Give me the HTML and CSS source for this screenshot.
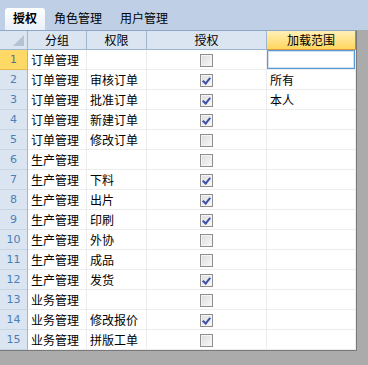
FILE: index.html
```html
<!DOCTYPE html>
<html lang="zh-CN">
<head>
  <meta charset="UTF-8" />
  <title>授权</title>
  <link rel="stylesheet" href="styles.css">
</head>
<body>
  <div class="tabs">
    <span class="tab active">授权</span>
    <span class="tab">角色管理</span>
    <span class="tab">用户管理</span>
  </div>

  <div class="sheet">
    <table class="grid">
      <colgroup>
        <col class="c-num"><col class="c-group"><col class="c-perm"><col class="c-auth"><col class="c-scope">
      </colgroup>
      <thead>
        <tr>
          <th class="corner"><span class="tri"></span></th>
          <th>分组</th>
          <th>权限</th>
          <th>授权</th>
          <th class="sel-head">加载范围</th>
        </tr>
      </thead>
      <tbody>
        <tr><td class="num sel-num">1</td><td>订单管理</td><td></td><td class="chk"><span class="box"></span></td><td class="sel-cell"></td></tr>
        <tr><td class="num">2</td><td>订单管理</td><td>审核订单</td><td class="chk"><span class="box on"></span></td><td>所有</td></tr>
        <tr><td class="num">3</td><td>订单管理</td><td>批准订单</td><td class="chk"><span class="box on"></span></td><td>本人</td></tr>
        <tr><td class="num">4</td><td>订单管理</td><td>新建订单</td><td class="chk"><span class="box on"></span></td><td></td></tr>
        <tr><td class="num">5</td><td>订单管理</td><td>修改订单</td><td class="chk"><span class="box"></span></td><td></td></tr>
        <tr><td class="num">6</td><td>生产管理</td><td></td><td class="chk"><span class="box"></span></td><td></td></tr>
        <tr><td class="num">7</td><td>生产管理</td><td>下料</td><td class="chk"><span class="box on"></span></td><td></td></tr>
        <tr><td class="num">8</td><td>生产管理</td><td>出片</td><td class="chk"><span class="box on"></span></td><td></td></tr>
        <tr><td class="num">9</td><td>生产管理</td><td>印刷</td><td class="chk"><span class="box on"></span></td><td></td></tr>
        <tr><td class="num">10</td><td>生产管理</td><td>外协</td><td class="chk"><span class="box"></span></td><td></td></tr>
        <tr><td class="num">11</td><td>生产管理</td><td>成品</td><td class="chk"><span class="box"></span></td><td></td></tr>
        <tr><td class="num">12</td><td>生产管理</td><td>发货</td><td class="chk"><span class="box on"></span></td><td></td></tr>
        <tr><td class="num">13</td><td>业务管理</td><td></td><td class="chk"><span class="box"></span></td><td></td></tr>
        <tr><td class="num">14</td><td>业务管理</td><td>修改报价</td><td class="chk"><span class="box on"></span></td><td></td></tr>
        <tr><td class="num">15</td><td>业务管理</td><td>拼版工单</td><td class="chk"><span class="box"></span></td><td></td></tr>
      </tbody>
    </table>
  </div>
</body>
</html>
```

FILE: styles.css
```css
body {
  margin: 0;
  background: #ababab;
  font-family: "Noto Sans CJK SC", "Liberation Sans", sans-serif;
  font-size: 12px;
  color: #000;
}

/* tab strip */
.tabs {
  height: 30px;
  box-sizing: border-box;
  padding: 8px 0 0 5px;
  background: #bfd0e6;
  display: flex;
  align-items: flex-end;
}

.tab {
  height: 22px;
  line-height: 20px;
  padding: 0 9px;
  font-size: 12px;
}

.tab.active {
  font-weight: bold;
  padding: 0 8px;
  background: linear-gradient(#ffffff, #e9f0f9);
  border-radius: 3px 3px 0 0;
}

/* grid */
.sheet {
  width: 357px;
  background: #fff;
  border-top: 1px solid #8ea9c8;
  border-bottom: 1px solid #7a7a7a;
  box-sizing: border-box;
  border-right: 1px solid #7a7a7a;
}

.grid {
  table-layout: fixed;
  border-collapse: separate;
  border-spacing: 0;
  width: 356px;
}

.c-num { width: 28px; }
.c-group { width: 59px; }
.c-perm { width: 60px; }
.c-auth { width: 120px; }
.c-scope { width: 89px; }

.grid th,
.grid td {
  height: 20px;
  padding: 0 0 0 3px;
  box-sizing: border-box;
  border-right: 1px solid #ececec;
  border-bottom: 1px solid #ececec;
  white-space: nowrap;
  overflow: hidden;
  line-height: 18px;
}

.grid th {
  height: 19px;
  font-weight: normal;
  text-align: center;
  padding: 0;
  background: #dbe5f1;
  border-right: 1px solid #9eb6ce;
  border-bottom: 1px solid #9eb6ce;
}

.grid th.corner {
  position: relative;
}

.tri {
  position: absolute;
  right: 3px;
  bottom: 3px;
  width: 0;
  height: 0;
  border-left: 11px solid transparent;
  border-bottom: 11px solid #b3c3d6;
}

.grid th.sel-head {
  background: linear-gradient(#fff0b8, #ffd65e);
  border-right: 1px solid #c28a30;
  border-bottom: 1px solid #e09a3a;
}

.grid td.num {
  padding: 0;
  text-align: center;
  color: #4a7fb8;
  font-family: "DejaVu Sans", sans-serif;
  font-size: 11px;
  background: #dbe5f1;
  border-right: 1px solid #9eb6ce;
  border-bottom: 1px solid #c7d5e6;
}

.grid td.sel-num {
  background: #ffd966;
  color: #5b6f8a;
  border-bottom-color: #e6b84a;
}

.grid td.sel-cell {
  box-shadow: inset 0 0 0 1px #5b9bd5, inset 0 0 0 2px #cfe0f3;
}

.grid td.chk {
  padding: 0;
  text-align: center;
}

.box {
  display: inline-block;
  vertical-align: middle;
  width: 13px;
  height: 13px;
  box-sizing: border-box;
  border: 1px solid #8f8f8f;
  background: linear-gradient(135deg, #dcdcdc, #f8f8f8);
  box-shadow: inset 0 0 0 1px #f4f4f4;
  position: relative;
  top: -1px;
}

.box.on::after {
  content: "";
  position: absolute;
  left: 3px;
  top: 1px;
  width: 3px;
  height: 6px;
  border-right: 2px solid #3b4fa8;
  border-bottom: 2px solid #3b4fa8;
  transform: rotate(40deg);
}
```
